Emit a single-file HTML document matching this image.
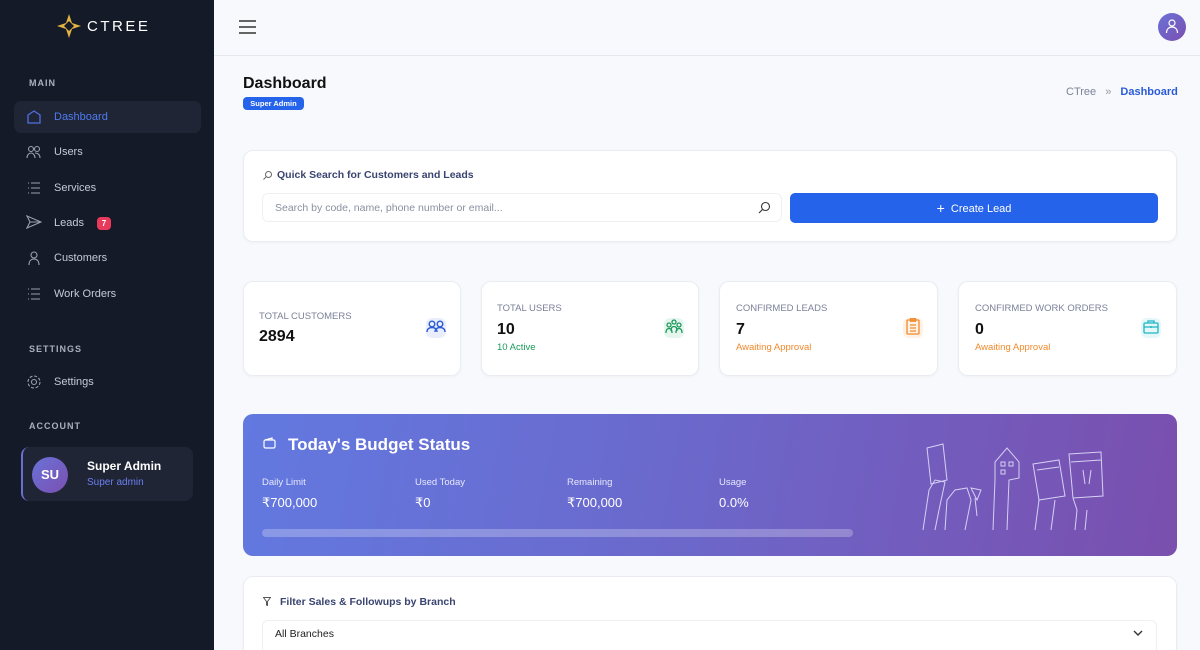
<!DOCTYPE html>
<html style="width:1200px;height:650px;overflow:hidden"><head><meta charset="utf-8"><style>
*{box-sizing:border-box;margin:0;padding:0}
html,body{width:1200px;height:650px;overflow:hidden}
body{background:#f7f9fc;font-family:"Liberation Sans",sans-serif;position:relative}
.a{position:absolute}
.sb{left:0;top:0;width:214px;height:650px;background:#151a28}
.sec{font-size:9px;font-weight:bold;color:#aab0c0;letter-spacing:1px;left:29px}
.mi{left:54px;font-size:11px;color:#c5cad6}
.ic{left:26px}
.card{background:#fff;border:1px solid #e9edf3;border-radius:10px;box-shadow:0 1px 3px rgba(0,0,0,.04)}
.lbl{font-size:9.5px;color:#7a8299}
.num{font-size:16px;font-weight:bold;color:#111}
.bl{font-size:9.5px;color:#e6e8fb}
.bv{font-size:13px;color:#fff;font-weight:500}
</style></head><body>
<div class="a sb"></div>
<svg class="a" style="left:56px;top:13px" width="26" height="26" viewBox="0 0 26 26"><path d="M13 1 L16 10 L25 13 L16 16 L13 25 L10 16 L1 13 L10 10Z" fill="#e3b341"/><path d="M13 8 L18 13 L13 18 L8 13Z" fill="#151a28"/></svg>
<div class="a" style="left:87px;top:18px;font-size:15px;color:#fff;letter-spacing:2.5px">CTREE</div>
<div class="a sec" style="top:78px">MAIN</div>
<div class="a" style="left:14px;top:101px;width:187px;height:32px;background:#1f2535;border-radius:7px"></div>
<svg class="a ic" style="top:109px" width="16" height="16" viewBox="0 0 16 16" fill="none" stroke="#4f6fe0" stroke-width="1.3"><path d="M2 6 L8 2 L14 6 V14 H2Z"/></svg>
<div class="a mi" style="top:111px;color:#4f7bf0">Dashboard</div>
<svg class="a ic" style="top:145px" width="16" height="14" viewBox="0 0 16 14" fill="none" stroke="#9aa0b0" stroke-width="1.1"><circle cx="5" cy="4" r="2.5"/><circle cx="11" cy="4" r="2.5"/><path d="M1 13c0-3 2-5 4-5s4 2 4 5M9 8c2 0 5 1 5 5"/></svg>
<div class="a mi" style="top:146px">Users</div>
<svg class="a ic" style="top:181px" width="16" height="14" viewBox="0 0 16 14" stroke="#9aa0b0" stroke-width="1.1"><path d="M2 2h1M5 2h9M2 7h1M5 7h9M2 12h1M5 12h9"/></svg>
<div class="a mi" style="top:182px">Services</div>
<svg class="a ic" style="top:215px" width="16" height="14" viewBox="0 0 16 14" fill="none" stroke="#9aa0b0" stroke-width="1.1"><path d="M1 1 L15 7 L1 13 L4 7Z M4 7h11"/></svg>
<div class="a mi" style="top:217px">Leads</div>
<div class="a" style="left:97px;top:217px;width:14px;height:13px;background:#e93a5c;border-radius:4px;color:#fff;font-size:8px;font-weight:bold;text-align:center;line-height:13px">7</div>
<svg class="a ic" style="top:251px" width="16" height="14" viewBox="0 0 16 14" fill="none" stroke="#9aa0b0" stroke-width="1.1"><circle cx="8" cy="4" r="3"/><path d="M3 14c0-4 2-6 5-6s5 2 5 6"/></svg>
<div class="a mi" style="top:252px">Customers</div>
<svg class="a ic" style="top:287px" width="16" height="14" viewBox="0 0 16 14" stroke="#9aa0b0" stroke-width="1.1"><path d="M2 2h1M5 2h9M2 7h1M5 7h9M2 12h1M5 12h9"/></svg>
<div class="a mi" style="top:288px">Work Orders</div>
<div class="a sec" style="top:344px">SETTINGS</div>
<svg class="a ic" style="top:374px" width="16" height="16" viewBox="0 0 16 16" fill="none" stroke="#9aa0b0" stroke-width="1.1"><circle cx="8" cy="8" r="2.5"/><circle cx="8" cy="8" r="6" stroke-dasharray="3 1.7"/></svg>
<div class="a mi" style="top:376px">Settings</div>
<div class="a sec" style="top:421px">ACCOUNT</div>
<div class="a" style="left:21px;top:447px;width:172px;height:54px;background:#1f2535;border-radius:8px;border-left:2px solid #6a6fd0"></div>
<div class="a" style="left:32px;top:457px;width:36px;height:36px;border-radius:50%;background:linear-gradient(135deg,#6a72d8,#7b4fb0);color:#fff;font-weight:bold;font-size:13px;text-align:center;line-height:36px">SU</div>
<div class="a" style="left:87px;top:459px;font-size:12px;font-weight:bold;color:#fff">Super Admin</div>
<div class="a" style="left:87px;top:477px;font-size:10px;color:#6b7ff0">Super admin</div>

<div class="a" style="left:214px;top:0;width:986px;height:56px;background:#f7f9fc;border-bottom:1px solid #e6e9ef"></div>
<svg class="a" style="left:239px;top:20px" width="17" height="14" viewBox="0 0 17 14" stroke="#333" stroke-width="1.4"><path d="M0 1h17M0 7h17M0 13h17"/></svg>
<div class="a" style="left:1158px;top:13px;width:28px;height:28px;border-radius:50%;background:linear-gradient(135deg,#6a72d8,#7b4fb0)"></div>
<svg class="a" style="left:1164px;top:18px" width="16" height="16" viewBox="0 0 16 16" fill="none" stroke="#fff" stroke-width="1.2"><circle cx="8" cy="5" r="3"/><path d="M2.5 15c0-4 2.5-6 5.5-6s5.5 2 5.5 6"/></svg>

<div class="a" style="left:243px;top:75px;font-size:16px;font-weight:bold;color:#111">Dashboard</div>
<div class="a" style="left:243px;top:97px;width:61px;height:13px;background:#2563eb;border-radius:4px;color:#fff;font-size:7.5px;font-weight:bold;text-align:center;line-height:13px">Super Admin</div>
<div class="a" style="left:1066px;top:86px;font-size:11px;color:#7a8299">CTree <span style="margin:0 6px;color:#999">»</span> <span style="color:#2a5bd7;font-weight:bold">Dashboard</span></div>

<div class="a card" style="left:243px;top:150px;width:934px;height:92px"></div>
<svg class="a" style="left:263px;top:171px" width="9" height="9" viewBox="0 0 9 9" fill="none" stroke="#666" stroke-width="1"><circle cx="5.5" cy="3.5" r="3"/><path d="M3.3 5.7 L0.5 8.5"/></svg>
<div class="a" style="left:277px;top:169px;font-size:10.5px;font-weight:bold;color:#3a4470">Quick Search for Customers and Leads</div>
<div class="a" style="left:262px;top:193px;width:520px;height:29px;border:1px solid #eef0f4;border-radius:6px"></div>
<div class="a" style="left:275px;top:202px;font-size:10.5px;color:#8a90a0">Search by code, name, phone number or email...</div>
<svg class="a" style="left:758px;top:201px" width="13" height="13" viewBox="0 0 13 13" fill="none" stroke="#333" stroke-width="1.1"><circle cx="7.5" cy="5.5" r="4"/><path d="M4.7 8.3 L1 12"/></svg>
<div class="a" style="left:790px;top:193px;width:368px;height:30px;background:#2563eb;border-radius:5px;color:#fff;font-size:11px;text-align:center;line-height:30px"><span style="font-size:14px;vertical-align:-1px">+</span>&nbsp; Create Lead</div>

<div class="a card" style="left:243px;top:281px;width:218px;height:95px"></div>
<div class="a lbl" style="left:259px;top:311px">TOTAL CUSTOMERS</div>
<div class="a num" style="left:259px;top:328px">2894</div>
<div class="a" style="left:426px;top:318px;width:20px;height:20px;border-radius:6px;background:#eaeefc"></div>
<svg class="a" style="left:426px;top:320px" width="20" height="13" viewBox="0 0 20 13" fill="none" stroke="#2a5bd7" stroke-width="1.4"><circle cx="6" cy="4" r="2.8"/><circle cx="14" cy="4" r="2.8"/><path d="M1 12c0-3 2-4.5 5-4.5s5 1.5 5 4.5M9 12c0-3 2-4.5 5-4.5s5 1.5 5 4.5"/></svg>

<div class="a card" style="left:481px;top:281px;width:218px;height:95px"></div>
<div class="a lbl" style="left:497px;top:303px">TOTAL USERS</div>
<div class="a num" style="left:497px;top:321px">10</div>
<div class="a" style="left:497px;top:342px;font-size:9.5px;color:#1a9a5a">10 Active</div>
<div class="a" style="left:664px;top:318px;width:20px;height:20px;border-radius:6px;background:#e6f6ee"></div>
<svg class="a" style="left:665px;top:319px" width="18" height="15" viewBox="0 0 18 15" fill="none" stroke="#1a9a5a" stroke-width="1.3"><circle cx="9" cy="3" r="2"/><circle cx="4" cy="6" r="2"/><circle cx="14" cy="6" r="2"/><path d="M1 14c0-3 1-4.5 3-4.5s3 1.5 3 4.5M6 12c0-3 1-4.5 3-4.5s3 1.5 3 4.5M11 14c0-3 1-4.5 3-4.5s3 1.5 3 4.5"/></svg>

<div class="a card" style="left:719px;top:281px;width:219px;height:95px"></div>
<div class="a lbl" style="left:736px;top:303px">CONFIRMED LEADS</div>
<div class="a num" style="left:736px;top:321px">7</div>
<div class="a" style="left:736px;top:342px;font-size:9.5px;color:#f08a2c">Awaiting Approval</div>
<div class="a" style="left:903px;top:318px;width:20px;height:20px;border-radius:6px;background:#fff1e4"></div>
<svg class="a" style="left:906px;top:318px" width="14" height="17" viewBox="0 0 14 17" fill="none" stroke="#f08a2c" stroke-width="1.3"><rect x="1" y="2" width="12" height="14" rx="1"/><rect x="4.5" y="0.7" width="5" height="2.5"/><path d="M4 7h6M4 10h6M4 13h6"/></svg>

<div class="a card" style="left:958px;top:281px;width:219px;height:95px"></div>
<div class="a lbl" style="left:975px;top:303px">CONFIRMED WORK ORDERS</div>
<div class="a num" style="left:975px;top:321px">0</div>
<div class="a" style="left:975px;top:342px;font-size:9.5px;color:#f08a2c">Awaiting Approval</div>
<div class="a" style="left:1141px;top:318px;width:20px;height:20px;border-radius:6px;background:#e4f7f9"></div>
<svg class="a" style="left:1143px;top:320px" width="16" height="14" viewBox="0 0 16 14" fill="none" stroke="#1fb5c4" stroke-width="1.3"><rect x="1" y="3" width="14" height="10" rx="1"/><path d="M5 3V1h6v2M1 7h14M8 6v2"/></svg>

<div class="a" style="left:243px;top:414px;width:934px;height:142px;border-radius:10px;background:linear-gradient(100deg,#6279e0 0%,#6b69cc 45%,#7a4fae 100%)"></div>
<svg class="a" style="left:263px;top:437px" width="13" height="12" viewBox="0 0 13 12" fill="none" stroke="#fff" stroke-width="1.2"><rect x="1" y="3" width="11" height="8" rx="1.5"/><path d="M2 3 L9 1 V3"/></svg>
<div class="a" style="left:288px;top:435px;font-size:17px;font-weight:bold;color:#fff">Today's Budget Status</div>
<div class="a bl" style="left:262px;top:477px">Daily Limit</div>
<div class="a bv" style="left:262px;top:495px">₹700,000</div>
<div class="a bl" style="left:415px;top:477px">Used Today</div>
<div class="a bv" style="left:415px;top:495px">₹0</div>
<div class="a bl" style="left:567px;top:477px">Remaining</div>
<div class="a bv" style="left:567px;top:495px">₹700,000</div>
<div class="a bl" style="left:719px;top:477px">Usage</div>
<div class="a bv" style="left:719px;top:495px">0.0%</div>
<div class="a" style="left:262px;top:529px;width:591px;height:8px;border-radius:4px;background:rgba(255,255,255,.25)"></div>
<svg class="a" style="left:915px;top:440px" width="200" height="95" viewBox="0 0 200 95" fill="none" stroke="#e8e6ff" stroke-width="1" opacity=".85">
<path d="M12 8 L28 4 L32 40 L16 44Z M8 90 L14 50 L20 40 L30 42 L24 70 L20 90"/>
<path d="M30 90 L32 60 L40 50 L52 48 L56 60 L50 90 M56 48 L66 50 L62 60 Z M60 58 L62 76"/>
<path d="M78 90 L80 40 L80 22 L92 8 L104 22 L104 38 L94 40 L92 90 M86 22h4v4h-4z M94 22h4v4h-4z M86 30h4v4h-4z"/>
<path d="M118 24 L144 20 L150 56 L124 60Z M122 30 L144 27 M120 90 L124 60 M136 90 L140 60"/>
<path d="M154 14 L186 12 L188 56 L158 58Z M156 22 L186 20 M168 30 L170 44 M176 30 L174 44 M160 90 L162 70 L158 58 M170 90 L172 70"/>
</svg>

<div class="a card" style="left:243px;top:576px;width:934px;height:74px;border-bottom:none;border-radius:10px 10px 0 0"></div>
<svg class="a" style="left:263px;top:597px" width="8" height="9" viewBox="0 0 8 9" fill="none" stroke="#555" stroke-width="1"><path d="M0.5 0.5h7L4.5 4.5V8.5L3.5 8V4.5Z"/></svg>
<div class="a" style="left:280px;top:596px;font-size:10.5px;font-weight:bold;color:#3a4470">Filter Sales &amp; Followups by Branch</div>
<div class="a" style="left:262px;top:620px;width:895px;height:30px;border:1px solid #eef0f4;border-bottom:none;border-radius:6px 6px 0 0"></div>
<div class="a" style="left:275px;top:628px;font-size:10.5px;color:#222">All Branches</div>
<svg class="a" style="left:1133px;top:630px" width="10" height="7" viewBox="0 0 10 7" fill="none" stroke="#333" stroke-width="1.4"><path d="M1 1 L5 5 L9 1"/></svg>
</body></html>
